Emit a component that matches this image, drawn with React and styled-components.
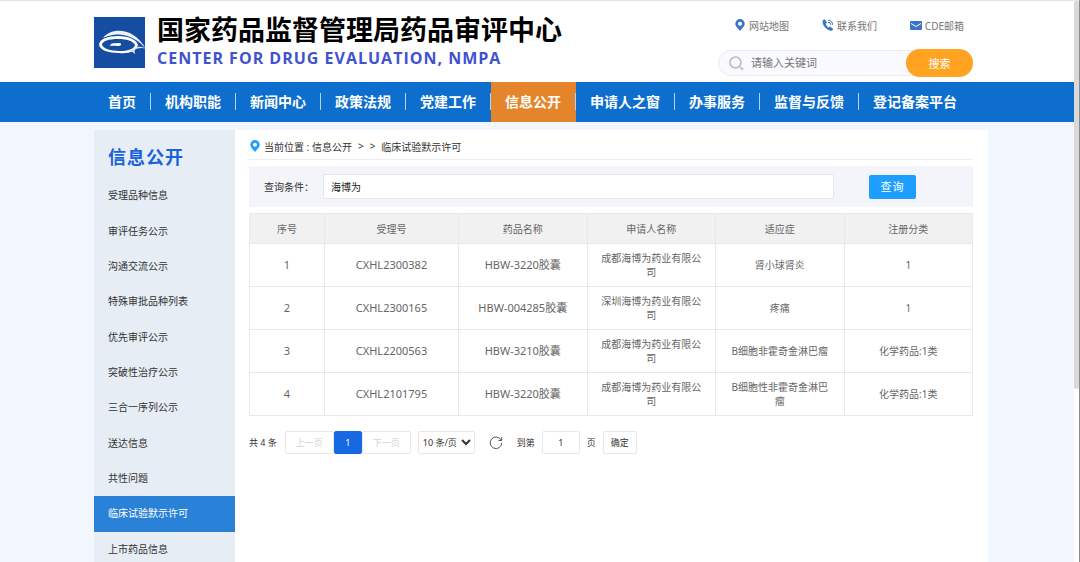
import React, { useState } from "react";
import styled, { createGlobalStyle, css } from "styled-components";

const GlobalStyle = createGlobalStyle`
  * {
    box-sizing: border-box;
  }
  body {
    margin: 0;
    overflow: hidden;
    background: #f2f7ff;
  }
  body, button, input, select {
    font-family: "Noto Sans", "Noto Sans CJK SC", sans-serif;
  }
`;

const Page = styled.div`
  height: 100vh;
  overflow: hidden;
  color: #333;
  font-size: 10px;
`;

const Container = styled.div`
  display: flex;
  max-width: 1200px;
  margin: 0 auto;
  padding: 0 92px 0 94px;
`;

const Header = styled.header`
  height: 82px;
  background: #fff;
  border-top: 1px solid #e4e4e4;
`;

const HeaderInner = styled(Container)`
  justify-content: space-between;
  padding-right: 107px;
`;

const Brand = styled.a`
  display: flex;
  gap: 10px;
  padding-top: 16px;
  color: #000;
  text-decoration: none;
`;

const BrandName = styled.h1`
  margin: -4px 0 0;
  font-size: 27px;
  line-height: 34px;
  font-weight: 700;
  white-space: nowrap;
`;

const BrandSub = styled.p`
  margin: 0;
  color: #4152cf;
  font-family: "Open Sans", sans-serif;
  font-size: 16px;
  line-height: 22px;
  font-weight: 700;
  letter-spacing: 1px;
  white-space: nowrap;
`;

const HeaderRight = styled.div`
  width: 255px;
  padding-top: 15px;
`;

const QuickLinks = styled.div`
  display: flex;
  justify-content: space-between;
  padding: 0 9px 0 16px;
`;

const QuickLink = styled.a`
  display: flex;
  align-items: center;
  gap: 3px;
  height: 18px;
  color: #777;
  text-decoration: none;
  white-space: nowrap;
`;

const Search = styled.form`
  display: flex;
  align-items: center;
  height: 26px;
  margin-top: 16px;
  padding-left: 10px;
  border: 1px solid #ebebf0;
  border-radius: 13px;
  background: #f9faff;
`;

const SearchInput = styled.input`
  flex: 1;
  min-width: 0;
  padding: 0 7px 2px;
  border: 0;
  outline: 0;
  background: none;
  font-size: 11px;
  &::placeholder {
    color: #757575;
  }
`;

const SearchButton = styled.button`
  width: 67px;
  height: 28px;
  margin-right: -1px;
  padding: 0;
  border: 0;
  border-radius: 14px;
  background: #ffa320;
  color: #fff;
  font-size: 11px;
`;

const Nav = styled.nav`
  height: 40px;
  background: #0e6ecd;
`;

const NavItem = styled.a`
  display: flex;
  align-items: center;
  height: 40px;
  padding-bottom: 2px;
  color: #fff;
  font-size: 14px;
  font-weight: 700;
  text-decoration: none;
  white-space: nowrap;
  background: ${(p) => (p.$active ? "#e5852b" : "none")};
  span {
    padding: 0 14px;
    line-height: 17px;
    border-right: 1px solid #b7d3f0;
  }
  &:last-child span {
    border-right: 0;
  }
`;

const Body = styled(Container)`
  padding-top: 8px;
`;

const Sidebar = styled.aside`
  flex: 0 0 141px;
  min-height: 440px;
  background: #e6edf5;
`;

const SidebarTitle = styled.h2`
  margin: 0;
  padding: 14px 14px 8px;
  color: #1a62de;
  font-size: 18px;
  line-height: 26px;
  letter-spacing: 1px;
`;

const SideList = styled.div`
  display: grid;
  grid-auto-rows: 1fr;
  height: 389px;
`;

const SideLink = styled.a`
  display: flex;
  align-items: center;
  padding: 0 14px 2px;
  color: ${(p) => (p.$active ? "#fff" : "#333")};
  background: ${(p) => (p.$active ? "#2a82d8" : "none")};
  text-decoration: none;
`;

const Main = styled.main`
  flex: 1;
  min-width: 0;
  min-height: 440px;
  padding: 0 15px 0 14px;
  background: #fff;
`;

const Crumbs = styled.div`
  display: flex;
  align-items: center;
  gap: 6px;
  height: 30px;
  padding-top: 3px;
  border-bottom: 1px solid #eee;
  svg {
    margin-right: -3px;
  }
`;

const QueryBar = styled.form`
  display: flex;
  align-items: center;
  height: 41px;
  margin: 6px 0;
  padding: 0 57px 0 15px;
  background: #f4f5fa;
`;

const QueryLabel = styled.label`
  width: 59px;
`;

const QueryInput = styled.input`
  flex: 1;
  min-width: 0;
  height: 25px;
  padding: 0 7px;
  border: 1px solid #e6e6e6;
  border-radius: 2px;
  background: #fff;
  color: #222;
  font-size: 10px;
`;

const QueryButton = styled.button`
  width: 47px;
  height: 24px;
  margin-left: 35px;
  padding: 0 0 2px;
  border: 0;
  border-radius: 2px;
  background: #1e9fff;
  color: #fff;
  font-size: 11px;
  letter-spacing: 1px;
`;

const Table = styled.table`
  width: 100%;
  border-collapse: collapse;
  table-layout: fixed;
  color: #666;
  text-align: center;
`;

const Th = styled.th`
  height: 30px;
  padding: 0;
  border: 1px solid #e9e9e9;
  background: #f1f1f1;
  font-weight: 400;
`;

const Td = styled.td`
  height: 43px;
  padding: 0 13px;
  border: 1px solid #e9e9e9;
  font-size: ${(p) => (p.$code ? "11px" : "10px")};
  line-height: 14px;
`;

const Pager = styled.div`
  display: flex;
  align-items: center;
  margin-top: 15px;
  font-size: 9px;
`;

const boxed = css`
  height: 23px;
  border: 1px solid #e8e8e8;
  border-radius: 2px;
  background: #fff;
  color: #333;
  font-size: 9px;
`;

const PageButtons = styled.div`
  display: flex;
  margin: 0 7px 0 8px;
`;

const PageButton = styled.button`
  ${boxed}
  width: 49px;
  padding: 0;
  color: #d2d2d2;
  ${(p) =>
    p.$current &&
    css`
      width: 28px;
      border-color: #1668e3;
      background: #1668e3;
      color: #fff;
    `}
`;

const SizeSelect = styled.select`
  ${boxed}
  width: 57px;
  margin-right: 14px;
  padding: 0;
`;

const IconButton = styled.button`
  display: flex;
  padding: 0;
  border: 0;
  background: none;
`;

const JumpLabel = styled.label`
  margin-left: 14px;
`;

const JumpInput = styled.input`
  ${boxed}
  width: 38px;
  margin: 0 7px;
  padding: 0;
  text-align: center;
`;

const JumpButton = styled.button`
  ${boxed}
  width: 34px;
  margin-left: 7px;
  padding: 0;
`;

const ScrollTrack = styled.div`
  position: fixed;
  top: 0;
  right: 0;
  width: 6px;
  height: 100%;
  border-right: 1px solid #8c8c8c;
  background: #fff;
`;

const ScrollThumb = styled.div`
  height: 389px;
  border-radius: 3px;
  background: #d9d9d9;
`;

const Logo = () => (
  <svg width="53" height="51" viewBox="0 0 53 51">
    <rect width="51" height="51" fill="#144da2" />
    <path d="M9 21C17 10 40 10 52 32C42 19 24 13 9 21Z" fill="#eef2f8" />
    <path
      fill="#fff"
      fillRule="evenodd"
      d="M5 28C5 22 14 19 24 19C35 19 43 23 44 28C43 34 35 37 25 36C14 36 6 33 5 28ZM8 28C9 31 16 34 25 34C34 34 40 32 41 28C39 24 33 22 24 22C15 22 8 24 8 28Z"
    />
    <path d="M34 34C42 31 45 27 52 32C46 30 44 32 41 32C40 34 41 35 41 37C38 35 39 34 34 34Z" fill="#dfe6ef" />
    <path d="M16 29C17 25 21 27 23 26C25 26 28 26 27 28C25 30 20 28 16 29Z" fill="#fff" />
  </svg>
);

const PinIcon = ({ color, size }) => (
  <svg width={size} height={size} viewBox="0 0 12 12">
    <path
      fill={color}
      fillRule="evenodd"
      d="M6 0a4.700 4.700 0 0 0-4.700 4.700C1.300 7.600 4.500 9.500 6 12c1.500-2.500 4.700-4.400 4.700-7.300A4.700 4.700 0 0 0 6 0Zm0 2.700a2 2 0 1 1 0 4 2 2 0 0 1 0-4Z"
    />
  </svg>
);

const PhoneIcon = () => (
  <svg width="12" height="12" viewBox="0 0 12 12">
    <path
      fill="#3b74c9"
      d="M1 1 2.800.3 5 3.500 3.700 5c.6 1.500 1.600 2.500 2.900 3.400L8.100 7.500 11.300 10 9.800 11.800C6.500 12.500-1.300 6.500 1 1Z"
    />
    <path d="M6 1.200a4.500 4.500 0 0 1 4.600 4.600M6 3.200a2.600 2.600 0 0 1 2.700 2.600" fill="none" stroke="#3b74c9" />
  </svg>
);

const MailIcon = () => (
  <svg width="12" height="10" viewBox="0 0 12 10">
    <rect y="1" width="12" height="9" rx="1" fill="#3b74c9" />
    <path d="M1 3.500 6 6.500 11 3.500" fill="none" stroke="#fff" />
  </svg>
);

const SearchIcon = () => (
  <svg width="15" height="15" viewBox="0 0 15 15" fill="none" stroke="#b9b9b9">
    <circle cx="6.500" cy="6.500" r="5.500" strokeWidth="1.500" />
    <path d="m11.500 11.500 2.500 2" strokeWidth="2" />
  </svg>
);

const RefreshIcon = () => (
  <svg width="14" height="14" viewBox="0 0 14 14" fill="none" stroke="#555">
    <path d="M12.200 4.200A5.800 5.800 0 1 0 12.800 7M12.700 1.300v3.200H9.500" />
  </svg>
);

const navItems = [
  "首页",
  "机构职能",
  "新闻中心",
  "政策法规",
  "党建工作",
  "信息公开",
  "申请人之窗",
  "办事服务",
  "监督与反馈",
  "登记备案平台",
];

const sideItems = [
  "受理品种信息",
  "审评任务公示",
  "沟通交流公示",
  "特殊审批品种列表",
  "优先审评公示",
  "突破性治疗公示",
  "三合一序列公示",
  "送达信息",
  "共性问题",
  "临床试验默示许可",
  "上市药品信息",
];

const columns = [
  { title: "序号", width: "75px", code: true },
  { title: "受理号", width: "134px", code: true },
  { title: "药品名称", code: true },
  { title: "申请人名称" },
  { title: "适应症" },
  { title: "注册分类" },
];

const rows = [
  ["1", "CXHL2300382", "HBW-3220胶囊", "成都海博为药业有限公司", "肾小球肾炎", "1"],
  ["2", "CXHL2300165", "HBW-004285胶囊", "深圳海博为药业有限公司", "疼痛", "1"],
  ["3", "CXHL2200563", "HBW-3210胶囊", "成都海博为药业有限公司", "B细胞非霍奇金淋巴瘤", "化学药品:1类"],
  ["4", "CXHL2101795", "HBW-3220胶囊", "成都海博为药业有限公司", "B细胞性非霍奇金淋巴瘤", "化学药品:1类"],
];

const App = () => {
  const [drug, setDrug] = useState("海博为");
  const [page, setPage] = useState("1");
  const stop = (e) => e.preventDefault();

  return (
    <Page lang="zh-CN">
      <GlobalStyle />
      <Header>
        <HeaderInner>
          <Brand href="#">
            <Logo />
            <div>
              <BrandName>国家药品监督管理局药品审评中心</BrandName>
              <BrandSub>CENTER FOR DRUG EVALUATION, NMPA</BrandSub>
            </div>
          </Brand>
          <HeaderRight>
            <QuickLinks>
              <QuickLink href="#map"><PinIcon color="#3b74c9" size={12} />网站地图</QuickLink>
              <QuickLink href="#contact"><PhoneIcon />联系我们</QuickLink>
              <QuickLink href="#mail"><MailIcon />CDE邮箱</QuickLink>
            </QuickLinks>
            <Search onSubmit={stop}>
              <SearchIcon />
              <SearchInput aria-label="请输入关键词" placeholder="请输入关键词" />
              <SearchButton>搜索</SearchButton>
            </Search>
          </HeaderRight>
        </HeaderInner>
      </Header>

      <Nav>
        <Container>
          {navItems.map((item) => (
            <NavItem key={item} href="#" $active={item === "信息公开"}>
              <span>{item}</span>
            </NavItem>
          ))}
        </Container>
      </Nav>

      <Body>
        <Sidebar>
          <SidebarTitle>信息公开</SidebarTitle>
          <SideList>
            {sideItems.map((item) => (
              <SideLink key={item} href="#" $active={item === "临床试验默示许可"}>
                {item}
              </SideLink>
            ))}
          </SideList>
        </Sidebar>

        <Main>
          <Crumbs>
            <PinIcon color="#1e9fff" size={12} />
            <span>当前位置 : 信息公开</span>
            <span>&gt;</span>
            <span>&gt;</span>
            <span>临床试验默示许可</span>
          </Crumbs>

          <QueryBar onSubmit={stop}>
            <QueryLabel htmlFor="drug">查询条件：</QueryLabel>
            <QueryInput id="drug" value={drug} onChange={(e) => setDrug(e.target.value)} />
            <QueryButton>查询</QueryButton>
          </QueryBar>

          <Table>
            <colgroup>
              {columns.map((c) => (
                <col key={c.title} width={c.width} />
              ))}
            </colgroup>
            <thead>
              <tr>
                {columns.map((c) => (
                  <Th key={c.title}>{c.title}</Th>
                ))}
              </tr>
            </thead>
            <tbody>
              {rows.map((row) => (
                <tr key={row[0]}>
                  {row.map((cell, i) => (
                    <Td key={columns[i].title} $code={columns[i].code}>{cell}</Td>
                  ))}
                </tr>
              ))}
            </tbody>
          </Table>

          <Pager>
            <span>共 4 条</span>
            <PageButtons>
              <PageButton disabled>上一页</PageButton>
              <PageButton $current>1</PageButton>
              <PageButton disabled>下一页</PageButton>
            </PageButtons>
            <SizeSelect aria-label="每页条数">
              <option>10 条/页</option>
            </SizeSelect>
            <IconButton aria-label="刷新"><RefreshIcon /></IconButton>
            <JumpLabel htmlFor="page">到第</JumpLabel>
            <JumpInput id="page" value={page} onChange={(e) => setPage(e.target.value)} />
            <span>页</span>
            <JumpButton>确定</JumpButton>
          </Pager>
        </Main>
      </Body>

      <ScrollTrack>
        <ScrollThumb />
      </ScrollTrack>
    </Page>
  );
};

export default App;
